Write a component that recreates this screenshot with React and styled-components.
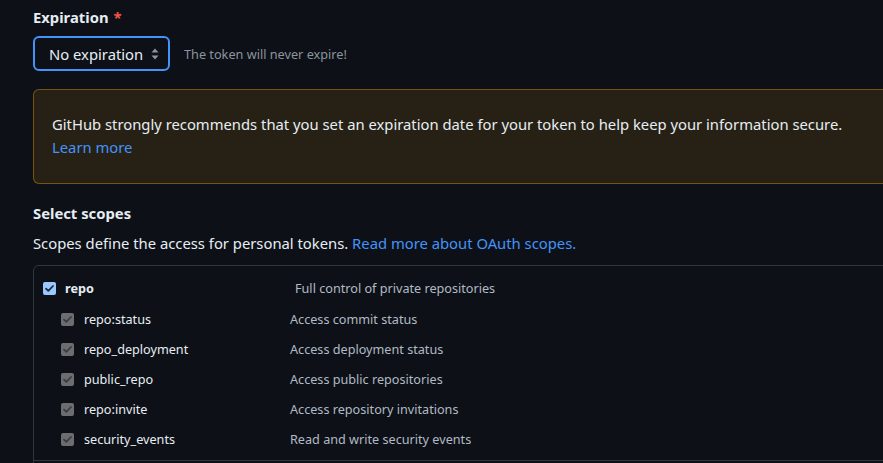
import styled, { createGlobalStyle } from "styled-components";

// =================== STYLES ===================

const GlobalStyle = createGlobalStyle`
  html, body {
    margin: 0;
    padding: 0;
    background: #0d1117;
    overflow: hidden;
  }
  body {
    font-family: "Noto Sans", "Open Sans", sans-serif;
    color: #e6edf3;
  }
`;

const Page = styled.div`
  width: 1100px;
  height: 463px;
  overflow: hidden;
  padding: 6px 0 0 33px;
  box-sizing: border-box;
`;

const FieldLabel = styled.div`
  font-size: 14.8px;
  font-weight: 700;
  line-height: 22px;
  color: #e6edf3;
`;

const Required = styled.span`
  color: #f85149;
  margin-left: 5px;
`;

const SelectRow = styled.div`
  display: flex;
  align-items: center;
  gap: 14px;
  margin-top: 8px;
`;

const SelectBox = styled.div`
  display: flex;
  align-items: center;
  justify-content: space-between;
  box-sizing: border-box;
  width: 137px;
  height: 35px;
  padding: 0 8px 0 14px;
  border: 2px solid #4493f8;
  border-radius: 6px;
  background: #0d1117;
  font-size: 14.8px;
  color: #e6edf3;
`;

const Hint = styled.span`
  font-size: 12.7px;
  color: #8b949e;
`;

const Banner = styled.div`
  margin-top: 18px;
  padding: 23px 18px 24px;
  border: 1px solid rgba(187, 128, 9, 0.55);
  border-radius: 6px;
  background: #272115;
  font-size: 14.8px;
  line-height: 23px;
  color: #e6edf3;
`;

const Link = styled.a`
  color: #4493f8;
  text-decoration: none;
`;

const SectionTitle = styled(FieldLabel)`
  margin-top: 18px;
`;

const Note = styled.p`
  margin: 8px 0 0;
  font-size: 14.8px;
  line-height: 22px;
  color: #e6edf3;
`;

const ScopeBox = styled.div`
  margin-top: 11px;
  border: 1px solid #30363d;
  border-radius: 6px;
  height: 400px;
`;

const ScopeGroup = styled.div`
  padding: 6px 0 6px;
  border-bottom: 1px solid #30363d;
`;

const ScopeRow = styled.div`
  display: flex;
  align-items: center;
  height: 30px;
  padding-left: ${({ $child }) => ($child ? "27px" : "9px")};
  font-size: 12.65px;

  &:first-child {
    height: 32px;
  }
`;

const ScopeName = styled.span`
  width: ${({ $child }) => ($child ? "206px" : "230px")};
  margin-left: ${({ $child }) => ($child ? "10px" : "9px")};
  font-weight: ${({ $child }) => ($child ? 400 : 700)};
  color: #e6edf3;
`;

const ScopeDesc = styled.span`
  color: #b1bac4;
`;

const Check = styled.span`
  display: inline-flex;
  align-items: center;
  justify-content: center;
  width: 13px;
  height: 13px;
  border-radius: 2px;
  background: ${({ $disabled }) => ($disabled ? "#6b6d70" : "#99c8ff")};
  flex-shrink: 0;
`;

// =================== COMPONENT ===================

function CheckMark({ disabled }) {
  return (
    <Check $disabled={disabled}>
      <svg width="11" height="11" viewBox="0 0 11 11">
        <path
          d="M2 5.6 L4.3 7.9 L9 3"
          fill="none"
          stroke={disabled ? "#3a3c40" : "#1b2a3c"}
          strokeWidth="1.8"
          strokeLinecap="round"
          strokeLinejoin="round"
        />
      </svg>
    </Check>
  );
}

const subScopes = [
  ["repo:status", "Access commit status"],
  ["repo_deployment", "Access deployment status"],
  ["public_repo", "Access public repositories"],
  ["repo:invite", "Access repository invitations"],
  ["security_events", "Read and write security events"],
];

export default function App() {
  return (
    <>
      <GlobalStyle />
      <Page>
        <FieldLabel>
          Expiration<Required>*</Required>
        </FieldLabel>
        <SelectRow>
          <SelectBox>
            <span>No expiration</span>
            <svg width="10" height="14" viewBox="0 0 10 14">
              <path d="M5 1.5 L8.5 5.5 H1.5 Z" fill="#8b949e" />
              <path d="M5 12.5 L8.5 8.5 H1.5 Z" fill="#8b949e" />
            </svg>
          </SelectBox>
          <Hint>The token will never expire!</Hint>
        </SelectRow>

        <Banner>
          GitHub strongly recommends that you set an expiration date for your
          token to help keep your information secure.
          <br />
          <Link href="#">Learn more</Link>
        </Banner>

        <SectionTitle>Select scopes</SectionTitle>
        <Note>
          Scopes define the access for personal tokens.{" "}
          <Link href="#">Read more about OAuth scopes.</Link>
        </Note>

        <ScopeBox>
          <ScopeGroup>
            <ScopeRow>
              <CheckMark />
              <ScopeName>repo</ScopeName>
              <ScopeDesc>Full control of private repositories</ScopeDesc>
            </ScopeRow>
            {subScopes.map(([name, desc]) => (
              <ScopeRow key={name} $child>
                <CheckMark disabled />
                <ScopeName $child>{name}</ScopeName>
                <ScopeDesc>{desc}</ScopeDesc>
              </ScopeRow>
            ))}
          </ScopeGroup>
        </ScopeBox>
      </Page>
    </>
  );
}
